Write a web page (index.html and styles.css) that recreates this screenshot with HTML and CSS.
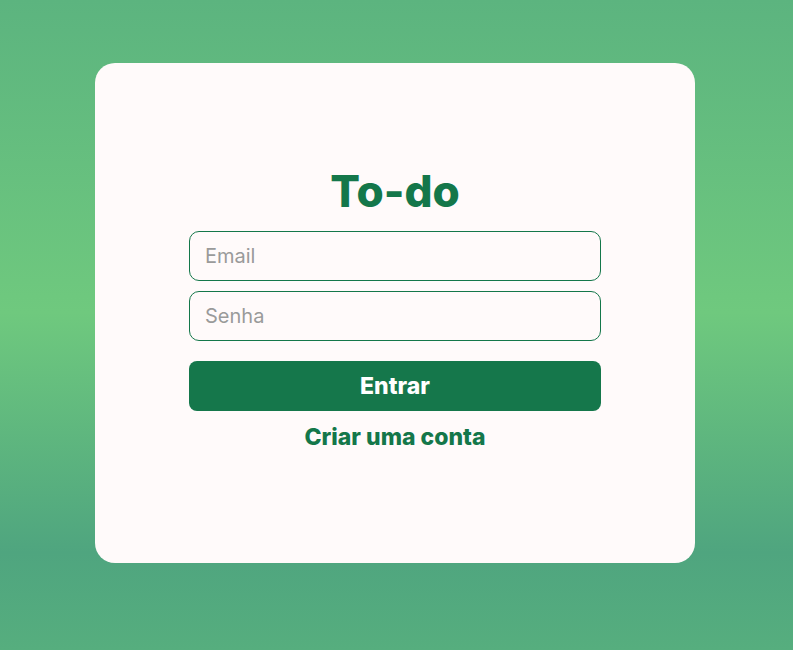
FILE: index.html
```html
<!DOCTYPE html>
<html lang="pt-BR">
<head>
<meta charset="utf-8">
<title>To-do</title>
<link rel="stylesheet" href="styles.css">
</head>
<body>
<main class="card">
  <form class="login">
    <h1 class="title">To-do</h1>
    <input class="field" type="email" placeholder="Email">
    <input class="field" type="password" placeholder="Senha">
    <button class="btn" type="button">Entrar</button>
    <a class="link" href="#">Criar uma conta</a>
  </form>
</main>
</body>
</html>
```
FILE: styles.css
```css
* { box-sizing: border-box; }
html, body { height: 100%; }
body {
  margin: 0;
  min-height: 650px;
  font-family: "Inter", "Open Sans", sans-serif;
  background: linear-gradient(to bottom, #5cb47f 0%, #6fc97e 48%, #4fa57f 85%, #56ae7e 100%);
  display: flex;
  align-items: flex-start;
  padding: 63px 0 0 95px;
}
.card {
  width: 600px;
  height: 500px;
  background: #fffafa;
  border-radius: 20px;
  display: flex;
  justify-content: center;
  padding-top: 103px;
}
.login {
  width: 412px;
  display: flex;
  flex-direction: column;
  align-items: stretch;
}
.title {
  margin: 0 0 15px;
  text-align: center;
  font-size: 44px;
  line-height: 50px;
  font-weight: 800;
  color: #14774a;
}
.field {
  height: 50px;
  border: 1px solid #14774a;
  border-radius: 10px;
  background: #fffafa;
  padding: 0 15px;
  font-family: inherit;
  font-size: 20px;
  color: #333;
  margin-bottom: 10px;
  outline: none;
}
.field::placeholder { color: #9a9a9a; }
.btn {
  height: 50px;
  margin-top: 10px;
  border: none;
  border-radius: 8px;
  background: #15774b;
  color: #fff;
  font-family: inherit;
  font-size: 23px;
  font-weight: 800;
}
.link {
  margin-top: 12px;
  text-align: center;
  color: #14774a;
  font-size: 23px;
  font-weight: 800;
  text-decoration: none;
  line-height: 28px;
}
```
